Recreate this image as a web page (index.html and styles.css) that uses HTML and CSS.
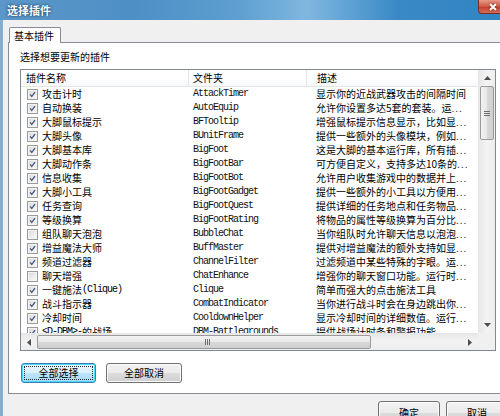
FILE: index.html
```html
<!DOCTYPE html>
<html lang="zh-CN">
<head>
<meta charset="utf-8">
<title>选择插件</title>
<link rel="stylesheet" href="styles.css">
</head>
<body>
<div class="window">
  <div class="titlebar">
    <span class="title">选择插件</span>
    <span class="close"><svg viewBox="0 0 10 8" width="10" height="8"><path d="M2 1 L8 7 M8 1 L2 7" stroke="#fff" stroke-width="2"/></svg></span>
  </div>
  <div class="client">
    <div class="tabstrip"><div class="tab">基本插件</div></div>
    <div class="panel">
      <div class="caption">选择想要更新的插件</div>
      <div class="listbox">
        <div class="view">
          <div class="header">
            <div class="hcell">插件名称</div>
            <div class="hcell">文件夹</div>
            <div class="hcell last">描述</div>
          </div>
          <div class="rows">
            <div class="row"><div class="c1"><span class="cb on"><svg viewBox="0 0 11 11"><path d="M2.6 5.4 L4.6 7.8 L8.6 2.6"/></svg></span>攻击计时</div><div class="c2">AttackTimer</div><div class="c3">显示你的近战武器攻击的间隔时间</div></div>
            <div class="row"><div class="c1"><span class="cb on"><svg viewBox="0 0 11 11"><path d="M2.6 5.4 L4.6 7.8 L8.6 2.6"/></svg></span>自动换装</div><div class="c2">AutoEquip</div><div class="c3">允许你设置多达5套的套装。运<span class="dots">...</span></div></div>
            <div class="row"><div class="c1"><span class="cb on"><svg viewBox="0 0 11 11"><path d="M2.6 5.4 L4.6 7.8 L8.6 2.6"/></svg></span>大脚鼠标提示</div><div class="c2">BFTooltip</div><div class="c3">增强鼠标提示信息显示，比如显<span class="dots">...</span></div></div>
            <div class="row"><div class="c1"><span class="cb on"><svg viewBox="0 0 11 11"><path d="M2.6 5.4 L4.6 7.8 L8.6 2.6"/></svg></span>大脚头像</div><div class="c2">BUnitFrame</div><div class="c3">提供一些额外的头像模块，例如<span class="dots">...</span></div></div>
            <div class="row"><div class="c1"><span class="cb on"><svg viewBox="0 0 11 11"><path d="M2.6 5.4 L4.6 7.8 L8.6 2.6"/></svg></span>大脚基本库</div><div class="c2">BigFoot</div><div class="c3">这是大脚的基本运行库，所有插<span class="dots">...</span></div></div>
            <div class="row"><div class="c1"><span class="cb on"><svg viewBox="0 0 11 11"><path d="M2.6 5.4 L4.6 7.8 L8.6 2.6"/></svg></span>大脚动作条</div><div class="c2">BigFootBar</div><div class="c3">可方便自定义，支持多达10条的<span class="dots">...</span></div></div>
            <div class="row"><div class="c1"><span class="cb on"><svg viewBox="0 0 11 11"><path d="M2.6 5.4 L4.6 7.8 L8.6 2.6"/></svg></span>信息收集</div><div class="c2">BigFootBot</div><div class="c3">允许用户收集游戏中的数据并上<span class="dots">...</span></div></div>
            <div class="row"><div class="c1"><span class="cb on"><svg viewBox="0 0 11 11"><path d="M2.6 5.4 L4.6 7.8 L8.6 2.6"/></svg></span>大脚小工具</div><div class="c2">BigFootGadget</div><div class="c3">提供一些额外的小工具以方便用<span class="dots">...</span></div></div>
            <div class="row"><div class="c1"><span class="cb on"><svg viewBox="0 0 11 11"><path d="M2.6 5.4 L4.6 7.8 L8.6 2.6"/></svg></span>任务查询</div><div class="c2">BigFootQuest</div><div class="c3">提供详细的任务地点和任务物品<span class="dots">...</span></div></div>
            <div class="row"><div class="c1"><span class="cb on"><svg viewBox="0 0 11 11"><path d="M2.6 5.4 L4.6 7.8 L8.6 2.6"/></svg></span>等级换算</div><div class="c2">BigFootRating</div><div class="c3">将物品的属性等级换算为百分比<span class="dots">...</span></div></div>
            <div class="row"><div class="c1"><span class="cb"></span>组队聊天泡泡</div><div class="c2">BubbleChat</div><div class="c3">当你组队时允许聊天信息以泡泡<span class="dots">...</span></div></div>
            <div class="row"><div class="c1"><span class="cb on"><svg viewBox="0 0 11 11"><path d="M2.6 5.4 L4.6 7.8 L8.6 2.6"/></svg></span>增益魔法大师</div><div class="c2">BuffMaster</div><div class="c3">提供对增益魔法的额外支持如显<span class="dots">...</span></div></div>
            <div class="row"><div class="c1"><span class="cb on"><svg viewBox="0 0 11 11"><path d="M2.6 5.4 L4.6 7.8 L8.6 2.6"/></svg></span>频道过滤器</div><div class="c2">ChannelFilter</div><div class="c3">过滤频道中某些特殊的字眼。运<span class="dots">...</span></div></div>
            <div class="row"><div class="c1"><span class="cb"></span>聊天增强</div><div class="c2">ChatEnhance</div><div class="c3">增强你的聊天窗口功能。运行时<span class="dots">...</span></div></div>
            <div class="row"><div class="c1"><span class="cb on"><svg viewBox="0 0 11 11"><path d="M2.6 5.4 L4.6 7.8 L8.6 2.6"/></svg></span>一键施法<span class="lat">(Clique)</span></div><div class="c2">Clique</div><div class="c3">简单而强大的点击施法工具</div></div>
            <div class="row"><div class="c1"><span class="cb on"><svg viewBox="0 0 11 11"><path d="M2.6 5.4 L4.6 7.8 L8.6 2.6"/></svg></span>战斗指示器</div><div class="c2">CombatIndicator</div><div class="c3">当你进行战斗时会在身边跳出你<span class="dots">...</span></div></div>
            <div class="row"><div class="c1"><span class="cb on"><svg viewBox="0 0 11 11"><path d="M2.6 5.4 L4.6 7.8 L8.6 2.6"/></svg></span>冷却时间</div><div class="c2">CooldownHelper</div><div class="c3">显示冷却时间的详细数值。运行<span class="dots">...</span></div></div>
            <div class="row"><div class="c1"><span class="cb on"><svg viewBox="0 0 11 11"><path d="M2.6 5.4 L4.6 7.8 L8.6 2.6"/></svg></span><span class="lat">&lt;D-DBM&gt;-</span>的战场</div><div class="c2">DBM-Battlegrounds</div><div class="c3">提供战场计时条和警报功能<span class="dots">...</span></div></div>
          </div>
        </div>
        <div class="vscroll">
          <div class="arrow"><svg viewBox="0 0 7 4" width="7" height="4"><path d="M0 4 L3.5 0 L7 4Z"/></svg></div>
          <div class="track v">
            <div class="thumb vthumb"><span class="grip"></span></div>
          </div>
          <div class="arrow"><svg viewBox="0 0 7 4" width="7" height="4"><path d="M0 0 L3.5 4 L7 0Z"/></svg></div>
        </div>
        <div class="hscroll">
          <div class="arrow"><svg viewBox="0 0 4 7" width="4" height="7"><path d="M4 0 L0 3.5 L4 7Z"/></svg></div>
          <div class="track h">
            <div class="thumb hthumb"><span class="hgrip"></span></div>
          </div>
          <div class="arrow"><svg viewBox="0 0 4 7" width="4" height="7"><path d="M0 0 L4 3.5 L0 7Z"/></svg></div>
        </div>
        <div class="corner"></div>
      </div>
      <div class="actions">
        <button class="btn focus"><span class="focusring">全部选择</span></button>
        <button class="btn wide">全部取消</button>
      </div>
    </div>
    <div class="footer">
      <button class="btn dlg">确定</button>
      <button class="btn dlg">取消</button>
    </div>
  </div>
</div>
</body>
</html>
```

FILE: styles.css
```css
html, body {
  margin: 0;
  padding: 0;
  width: 500px;
  height: 416px;
  overflow: hidden;
  background: #f0f0f0;
}

.window {
  width: 530px;
  height: 440px;
  display: flex;
  flex-direction: column;
  font-family: "Noto Sans CJK SC", sans-serif;
  font-size: 10px;
  color: #000;
  background: #f0f0f0;
}

.titlebar {
  height: 20px;
  flex: none;
  display: flex;
  align-items: flex-start;
  background: linear-gradient(to right, #5d97c8 0%, #4d8fc6 25%, #5e9fd0 45%, #7fb7df 58%, #3a89c6 75%, #2f82c2 100%);
}

.title {
  margin: 3px 0 0 7px;
  font-size: 11px;
  line-height: 14px;
  font-weight: bold;
  color: #fff;
  text-shadow: 0 0 3px rgba(20, 50, 90, 0.9), 0 0 1px rgba(20, 50, 90, 0.8);
  letter-spacing: 0;
}

.close {
  margin-left: auto;
  margin-right: 9px;
  width: 43px;
  height: 14px;
  box-sizing: border-box;
  border: 1px solid #7a2c22;
  border-top: none;
  border-radius: 0 0 4px 4px;
  background: linear-gradient(#e59a86, #cf5a44 50%, #c0402c 55%, #d4705c);
  display: flex;
  align-items: center;
  padding-left: 9px;
}

.close svg {
  display: block;
  filter: drop-shadow(0 0 1px #5a1a10);
}

.client {
  flex: 1;
  display: flex;
  flex-direction: column;
  border-left: 3px solid #86aed3;
  border-right: 3px solid #86aed3;
  padding-top: 7px;
}

.tabstrip {
  display: flex;
  padding-left: 6px;
  position: relative;
  z-index: 1;
}

.tab {
  height: 15px;
  width: 52px;
  box-sizing: border-box;
  border: 1px solid #898c95;
  border-bottom: none;
  border-radius: 2px 2px 0 0;
  background: #fff;
  line-height: 15px;
  padding-left: 4px;
  margin-bottom: -1px;
  height: 16px;
}

.panel {
  margin-left: 5px;
  margin-right: 6px;
  height: 352px;
  box-sizing: border-box;
  border: 1px solid #898c95;
  background: #fff;
  padding: 8px 0 0 11px;
  display: flex;
  flex-direction: column;
}

.caption {
  line-height: 12px;
  height: 12px;
}

.listbox {
  margin-top: 6px;
  width: 476px;
  height: 282px;
  box-sizing: border-box;
  border: 1px solid #828790;
  display: grid;
  grid-template-columns: 457px 17px;
  grid-template-rows: 263px 17px;
  background: #fff;
}

.view {
  overflow: hidden;
}

.header {
  display: grid;
  grid-template-columns: 168px 118px 171px;
  height: 17px;
  box-sizing: border-box;
  border-bottom: 1px solid #e5e5e5;
  background: linear-gradient(#fff, #fff 50%, #f7f8fa);
}

.hcell {
  line-height: 15px;
  padding-left: 5px;
  border-right: 1px solid #e3e4e6;
  white-space: nowrap;
  overflow: hidden;
}

.hcell + .hcell {
  padding-left: 4px;
}

.hcell.last {
  padding-left: 10px;
  border-right: none;
}

.rows {
  display: flex;
  flex-direction: column;
}

.row {
  display: grid;
  grid-template-columns: 168px 118px 171px;
  height: 14px;
  line-height: 14px;
  white-space: nowrap;
}

.row > div {
  overflow: hidden;
}

.c1 {
  display: flex;
  align-items: center;
  padding-left: 6px;
}

.c2 {
  padding-left: 4px;
  font-family: "Liberation Mono", monospace;
  font-size: 10px;
  letter-spacing: -1px;
  color: #111;
}

.c3 {
  padding-left: 9px;
}

.lat {
  font-family: "Liberation Mono", monospace;
  letter-spacing: -1px;
}

.dots {
  letter-spacing: 1px;
  color: #333;
}

.cb {
  width: 11px;
  height: 11px;
  flex: none;
  box-sizing: border-box;
  border: 1px solid #9a9a9a;
  background: linear-gradient(135deg, #d6d6d6, #f2f2f2 70%, #fafafa);
  margin-right: 4px;
  box-shadow: inset 0 0 0 1px #f4f4f4;
}

.cb svg {
  display: block;
  width: 9px;
  height: 9px;
  margin: 0;
}

.cb svg path {
  fill: none;
  stroke: #4a5a82;
  stroke-width: 1.7;
}

/* scrollbars */
.vscroll {
  grid-row: 1;
  grid-column: 2;
  display: flex;
  flex-direction: column;
  background: linear-gradient(to right, #e8e8e8, #f3f3f3 50%, #ededed);
  border-left: 1px solid #e6e6e6;
  box-sizing: border-box;
}

.hscroll {
  grid-row: 2;
  grid-column: 1;
  display: flex;
  background: linear-gradient(#e8e8e8, #f3f3f3 50%, #ededed);
  border-top: 1px solid #e6e6e6;
  box-sizing: border-box;
}

.corner {
  grid-row: 2;
  grid-column: 2;
  background: #f0f0f0;
}

.arrow {
  width: 16px;
  height: 16px;
  flex: none;
  display: flex;
  align-items: center;
  justify-content: center;
}

.arrow svg path {
  fill: #4d4d4d;
}

.track {
  flex: 1;
  display: flex;
}

.track.v {
  flex-direction: column;
}

.thumb {
  box-sizing: border-box;
  border: 1px solid #9a9a9a;
  border-radius: 2px;
  display: flex;
  align-items: center;
  justify-content: center;
}

.vthumb {
  margin: 0 1px;
  height: 54px;
  background: linear-gradient(to right, #f2f2f2, #e8e8e8 50%, #d8d8d8 51%, #cfcfcf);
}

.hthumb {
  margin: 1px 0;
  width: 334px;
  background: linear-gradient(#f2f2f2, #e8e8e8 50%, #d8d8d8 51%, #cfcfcf);
}

.grip {
  width: 6px;
  height: 5px;
  background: repeating-linear-gradient(#6e6e6e 0 1px, transparent 1px 2px);
}

.hgrip {
  width: 5px;
  height: 6px;
  margin-left: 6px;
  background: repeating-linear-gradient(to right, #6e6e6e 0 1px, transparent 1px 2px);
}

/* buttons */
.actions {
  display: flex;
  gap: 10px;
  margin-top: 12px;
  padding-left: 1px;
}

.btn {
  font-family: "Noto Sans CJK SC", sans-serif;
  font-size: 10px;
  color: #000;
  height: 20px;
  width: 75px;
  padding: 0;
  box-sizing: border-box;
  border: 1px solid #707070;
  border-radius: 3px;
  background: linear-gradient(#f2f2f2, #ebebeb 50%, #dddddd 51%, #cfcfcf);
  box-shadow: inset 0 0 0 1px #fbfbfb;
  display: flex;
  align-items: center;
  justify-content: center;
  line-height: 12px;
}

.btn.wide {
  width: 76px;
}

.btn.focus {
  border-color: #3c7fb1;
  box-shadow: inset 0 0 0 1px #48d8fb;
  background: linear-gradient(#eaf6fd, #d9f0fc 50%, #bee6fd 51%, #a7d9f5);
  padding: 2px;
}

.focusring {
  flex: 1;
  align-self: stretch;
  border: 1px dotted #2a2a2a;
  display: flex;
  align-items: center;
  justify-content: center;
}

.footer {
  display: flex;
  justify-content: flex-end;
  gap: 6px;
  margin-top: 7px;
  padding-right: 19px;
}

.btn.dlg {
  width: 62px;
  height: 23px;
}
```
